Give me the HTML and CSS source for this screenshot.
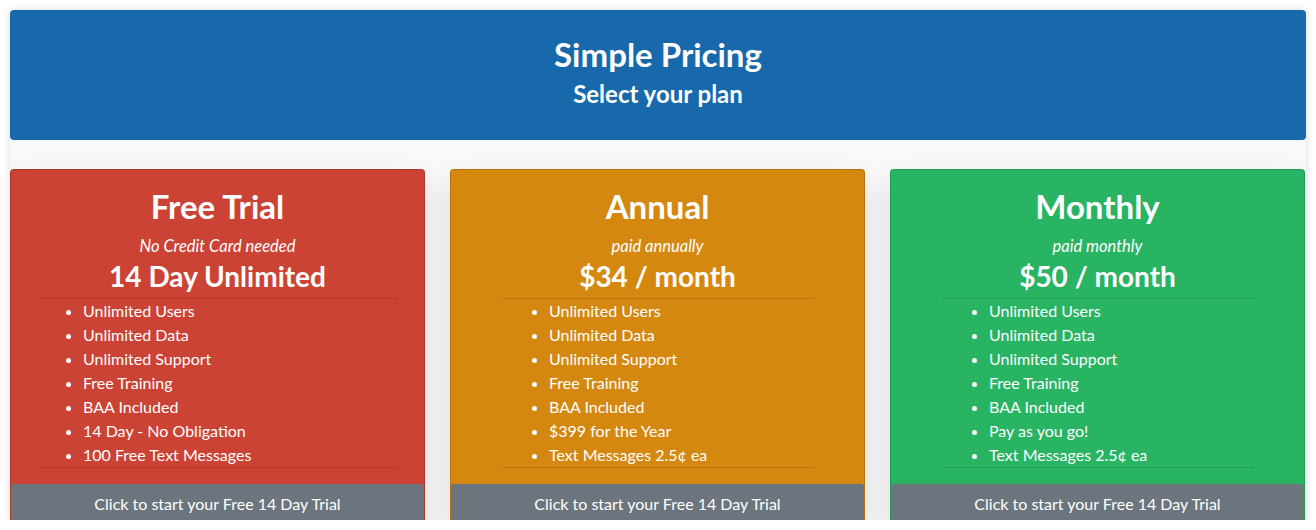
FILE: index.html
```html
<!DOCTYPE html>
<html lang="en">
<head>
  <meta charset="UTF-8">
  <meta name="viewport" content="width=device-width, initial-scale=1.0">
  <title>Simple Pricing</title>
  <link rel="stylesheet" href="styles.css">
</head>
<body>
  <div class="page">
    <div class="banner">
      <h1>Simple Pricing</h1>
      <h2>Select your plan</h2>
    </div>

    <div class="plans">
      <!-- free trial -->
      <div class="plan plan-red">
        <h3 class="plan-name">Free Trial</h3>
        <p class="plan-note">No Credit Card needed</p>
        <h4 class="plan-price">14 Day Unlimited</h4>
        <div class="plan-body wide">
          <ul>
            <li>Unlimited Users</li>
            <li>Unlimited Data</li>
            <li>Unlimited Support</li>
            <li>Free Training</li>
            <li>BAA Included</li>
            <li>14 Day - No Obligation</li>
            <li>100 Free Text Messages</li>
          </ul>
        </div>
        <button class="plan-btn">Click to start your Free 14 Day Trial</button>
      </div>

      <!-- annual -->
      <div class="plan plan-orange">
        <h3 class="plan-name">Annual</h3>
        <p class="plan-note">paid annually</p>
        <h4 class="plan-price">$34 / month</h4>
        <div class="plan-body">
          <ul>
            <li>Unlimited Users</li>
            <li>Unlimited Data</li>
            <li>Unlimited Support</li>
            <li>Free Training</li>
            <li>BAA Included</li>
            <li>$399 for the Year</li>
            <li>Text Messages 2.5&cent; ea</li>
          </ul>
        </div>
        <button class="plan-btn">Click to start your Free 14 Day Trial</button>
      </div>

      <!-- monthly -->
      <div class="plan plan-green">
        <h3 class="plan-name">Monthly</h3>
        <p class="plan-note">paid monthly</p>
        <h4 class="plan-price">$50 / month</h4>
        <div class="plan-body">
          <ul>
            <li>Unlimited Users</li>
            <li>Unlimited Data</li>
            <li>Unlimited Support</li>
            <li>Free Training</li>
            <li>BAA Included</li>
            <li>Pay as you go!</li>
            <li>Text Messages 2.5&cent; ea</li>
          </ul>
        </div>
        <button class="plan-btn">Click to start your Free 14 Day Trial</button>
      </div>
    </div>
  </div>
</body>
</html>
```

FILE: styles.css
```css
body, html {
  margin: 0;
  padding: 0;
  background-color: #fff;
  font-family: Lato, "Open Sans", sans-serif;
  overflow: hidden;
}
.page {
  margin: 10px 10px 0 10px;
  height: 510px;
  background: #f9f9f9;
  box-shadow: 0 0 8px rgba(0, 0, 0, 0.15);
  overflow: hidden;
}
.banner {
  height: 130px;
  box-sizing: border-box;
  padding-top: 24px;
  background: #1769ab;
  border-radius: 4px;
  color: #fff;
  text-align: center;
}
.banner h1 {
  margin: 0;
  font-size: 33px;
  font-weight: 700;
  line-height: 40px;
}
.banner h2 {
  margin: 4px 0 0 0;
  font-size: 24px;
  font-weight: 700;
  line-height: 32px;
}
.plans {
  display: grid;
  grid-template-columns: 415px 415px 415px;
  column-gap: 25px;
  margin-top: 29px;
}
.plan {
  border: 1px solid rgba(0, 0, 0, 0.15);
  border-radius: 4px;
  color: #fff;
  text-align: center;
  padding-top: 14px;
  box-shadow: 0 12px 30px rgba(0, 0, 0, 0.12);
}
.plan-red { background: #cb4335; }
.plan-orange { background: #d4880f; }
.plan-green { background: #28b463; }
.plan-name {
  margin: 0;
  font-size: 33px;
  font-weight: 700;
  line-height: 44px;
}
.plan-note {
  margin: 7px 0 0 0;
  font-size: 16.5px;
  font-style: italic;
  line-height: 22px;
}
.plan-price {
  margin: 0 0 3px 0;
  font-size: 28px;
  font-weight: 700;
  line-height: 38px;
}
.plan-body {
  margin: 0 50px 0 52px;
  border-top: 1px solid rgba(0, 0, 0, 0.12);
  border-bottom: 1px solid rgba(0, 0, 0, 0.12);
  text-align: left;
}
.plan-body.wide {
  margin: 0 26px;
}
.plan-body ul {
  margin: 0;
  padding-left: 46px;
}
.plan-body li {
  font-size: 16px;
  line-height: 24px;
}
.plan-btn {
  display: block;
  width: 100%;
  margin-top: 16px;
  height: 38px;
  border: none;
  border-radius: 3px;
  background: #6c757d;
  color: #fff;
  font-family: inherit;
  font-size: 16px;
  cursor: pointer;
}
```
